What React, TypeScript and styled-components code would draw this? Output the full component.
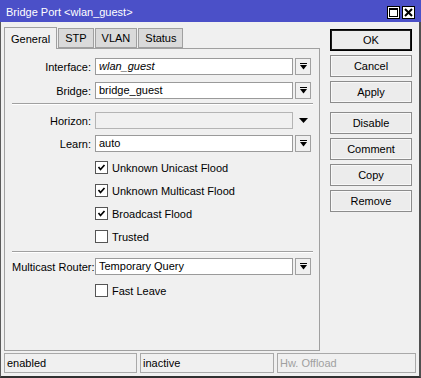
import React from "react"
import styled, { createGlobalStyle } from "styled-components"

const GlobalStyle = createGlobalStyle`
  html, body {
    margin: 0;
    padding: 0;
    background: #f0f0f0;
  }
  body {
    font-family: "Liberation Sans", Arial, sans-serif;
    font-size: 11px;
    color: #000;
  }
`

const DropIcon: React.FC = () => (
  <svg width="7" height="7" viewBox="0 0 7 7">
    <rect x="0" y="0" width="7" height="1" fill="#000" />
    <polygon points="0,2 7,2 3.5,6.5" fill="#000" />
  </svg>
)

const Tick: React.FC = () => (
  <svg width="11" height="11" viewBox="0 0 11 11">
    <polyline points="2.5,5 4.5,7.5 8.5,3" fill="none" stroke="#000" strokeWidth="1.7" />
  </svg>
)

const App: React.FC = () => {
  const buttons = [
    { label: "OK", main: true },
    { label: "Cancel" },
    { label: "Apply" },
    { label: "Disable", gap: true },
    { label: "Comment" },
    { label: "Copy" },
    { label: "Remove" },
  ]

  const checks = [
    { label: "Unknown Unicast Flood", on: true },
    { label: "Unknown Multicast Flood", on: true },
    { label: "Broadcast Flood", on: true },
    { label: "Trusted", on: false },
  ]

  return (
    <Window>
      <GlobalStyle />
      <TitleBar>
        <Title>Bridge Port &lt;wlan_guest&gt;</Title>
        <TitleButtons>
          <TitleBtn>
            <svg width="9" height="9" viewBox="0 0 9 9">
              <rect x="0.5" y="0.5" width="8" height="8" fill="none" stroke="#000" />
              <rect x="0" y="0" width="9" height="2" fill="#000" />
            </svg>
          </TitleBtn>
          <TitleBtn>
            <svg width="9" height="9" viewBox="0 0 9 9">
              <path d="M1 1 L8 8 M8 1 L1 8" stroke="#000" strokeWidth="2" />
            </svg>
          </TitleBtn>
        </TitleButtons>
      </TitleBar>
      <Frame>
        <Body>
          <LeftCol>
            <Tabs>
              <Tab $active>General</Tab>
              <Tab>STP</Tab>
              <Tab>VLAN</Tab>
              <Tab>Status</Tab>
            </Tabs>
            <Panel>
              <Row $top={9}>
                <Label>Interface:</Label>
                <Field $italic>wlan_guest</Field>
                <DropBtn><DropIcon /></DropBtn>
              </Row>
              <Row $top={7}>
                <Label>Bridge:</Label>
                <Field>bridge_guest</Field>
                <DropBtn><DropIcon /></DropBtn>
              </Row>
              <Separator $top={4} />
              <Row $top={7}>
                <Label>Horizon:</Label>
                <Field $disabled />
                <Arrow>
                  <svg width="9" height="5" viewBox="0 0 9 5">
                    <polygon points="0,0 9,0 4.5,5" fill="#000" />
                  </svg>
                </Arrow>
              </Row>
              <Row $top={6}>
                <Label>Learn:</Label>
                <Field>auto</Field>
                <DropBtn><DropIcon /></DropBtn>
              </Row>
              {checks.map((c, i) => (
                <Row key={c.label} $top={i === 0 ? 7 : 6}>
                  <Label />
                  <Check>{c.on && <Tick />}</Check>
                  <CheckText>{c.label}</CheckText>
                </Row>
              ))}
              <Separator $top={6} />
              <Row $top={5}>
                <Label>Multicast Router:</Label>
                <Field>Temporary Query</Field>
                <DropBtn><DropIcon /></DropBtn>
              </Row>
              <Row $top={7}>
                <Label />
                <Check />
                <CheckText>Fast Leave</CheckText>
              </Row>
            </Panel>
          </LeftCol>
          <ButtonCol>
            {buttons.map(b => (
              <Button key={b.label} $main={b.main} $gap={b.gap}>
                {b.label}
              </Button>
            ))}
          </ButtonCol>
        </Body>
        <StatusBar>
          <StatusCell $width={134}>enabled</StatusCell>
          <StatusCell $width={135}>inactive</StatusCell>
          <StatusCell $width={140} $muted>Hw. Offload</StatusCell>
        </StatusBar>
      </Frame>
    </Window>
  )
}

const Window = styled.div`
  width: 421px;
  height: 378px;
  display: flex;
  flex-direction: column;
  background: #f0f0f0;
`

const TitleBar = styled.div`
  height: 22px;
  background: #4b50c8;
  display: flex;
  align-items: center;
  justify-content: space-between;
  padding: 0 6px 0 6px;
  box-sizing: border-box;
`

const Title = styled.div`
  color: #fff;
  font-size: 11px;
  padding-top: 2px;
`

const TitleButtons = styled.div`
  display: flex;
  gap: 2px;
  margin-top: 2px;
`

const TitleBtn = styled.div`
  width: 13px;
  height: 13px;
  box-sizing: border-box;
  border: 1px solid #000;
  background: #fff;
  display: flex;
  align-items: center;
  justify-content: center;
`

const Frame = styled.div`
  flex: 1;
  display: flex;
  flex-direction: column;
  border-left: 1px solid #5a5a5a;
  border-right: 2px solid #505050;
  border-bottom: 2px solid #303030;
  padding: 0 3px 3px 3px;
`

const Body = styled.div`
  flex: 1;
  display: flex;
`

const LeftCol = styled.div`
  width: 316px;
  display: flex;
  flex-direction: column;
  padding-top: 5px;
`

const Tabs = styled.div`
  height: 21px;
  display: flex;
  align-items: flex-end;
  gap: 1px;
  position: relative;
  z-index: 1;
`

const Tab = styled.div<{ $active?: boolean }>`
  box-sizing: border-box;
  height: ${p => (p.$active ? 22 : 20)}px;
  margin-bottom: ${p => (p.$active ? -1 : 0)}px;
  padding: 0 6px;
  border: 1px solid #a0a0a0;
  border-bottom: ${p => (p.$active ? "none" : "1px solid #a0a0a0")};
  background: ${p => (p.$active ? "#f0f0f0" : "#dadada")};
  display: flex;
  align-items: center;
`

const Panel = styled.div`
  height: 303px;
  box-sizing: border-box;
  border: 1px solid #a0a0a0;
  padding: 0 6px 0 7px;
  display: flex;
  flex-direction: column;
`

const Row = styled.div<{ $top: number }>`
  display: flex;
  align-items: center;
  height: 17px;
  margin-top: ${p => p.$top}px;
`

const Label = styled.div`
  width: 79px;
  margin-right: 4px;
  text-align: right;
  white-space: nowrap;
`

const Field = styled.div<{ $italic?: boolean; $disabled?: boolean }>`
  width: 198px;
  height: 17px;
  box-sizing: border-box;
  border: 1px solid ${p => (p.$disabled ? "#b4b4b4" : "#9a9a9a")};
  background: ${p => (p.$disabled ? "#f0f0f0" : "#fff")};
  font-style: ${p => (p.$italic ? "italic" : "normal")};
  padding-left: 3px;
  line-height: 15px;
`

const DropBtn = styled.div`
  width: 16px;
  height: 17px;
  margin-left: 2px;
  box-sizing: border-box;
  border: 1px solid #a0a0a0;
  background: #f0f0f0;
  display: flex;
  align-items: center;
  justify-content: center;
`

const Arrow = styled.div`
  width: 16px;
  margin-left: 2px;
  display: flex;
  justify-content: center;
`

const Separator = styled.div<{ $top: number }>`
  margin-top: ${p => p.$top}px;
  border-top: 1px solid #a0a0a0;
  border-bottom: 1px solid #fff;
`

const Check = styled.div`
  width: 13px;
  height: 13px;
  box-sizing: border-box;
  border: 1px solid #555;
  background: #fff;
  display: flex;
  align-items: center;
  justify-content: center;
`

const CheckText = styled.div`
  margin-left: 4px;
`

const ButtonCol = styled.div`
  margin-left: 10px;
  padding-top: 7px;
  width: 82px;
  display: flex;
  flex-direction: column;
`

const Button = styled.div<{ $main?: boolean; $gap?: boolean }>`
  height: 22px;
  box-sizing: border-box;
  margin-top: ${p => (p.$gap ? 9 : 4)}px;
  &:first-child {
    margin-top: 0;
  }
  border: 1px solid ${p => (p.$main ? "#000" : "#8c8c8c")};
  box-shadow: ${p => (p.$main ? "inset 0 0 0 1px #1a1a1a" : "inset 0 0 0 1px #f8f8f8")};
  background: #ececec;
  display: flex;
  align-items: center;
  justify-content: center;
`

const StatusBar = styled.div`
  height: 20px;
  margin-top: 2px;
  display: flex;
  gap: 3px;
`

const StatusCell = styled.div<{ $width: number; $muted?: boolean }>`
  width: ${p => p.$width}px;
  box-sizing: border-box;
  border: 1px solid #a9a9a9;
  padding-left: 2px;
  display: flex;
  align-items: center;
  color: ${p => (p.$muted ? "#a0a0a0" : "#000")};
`

export default App
